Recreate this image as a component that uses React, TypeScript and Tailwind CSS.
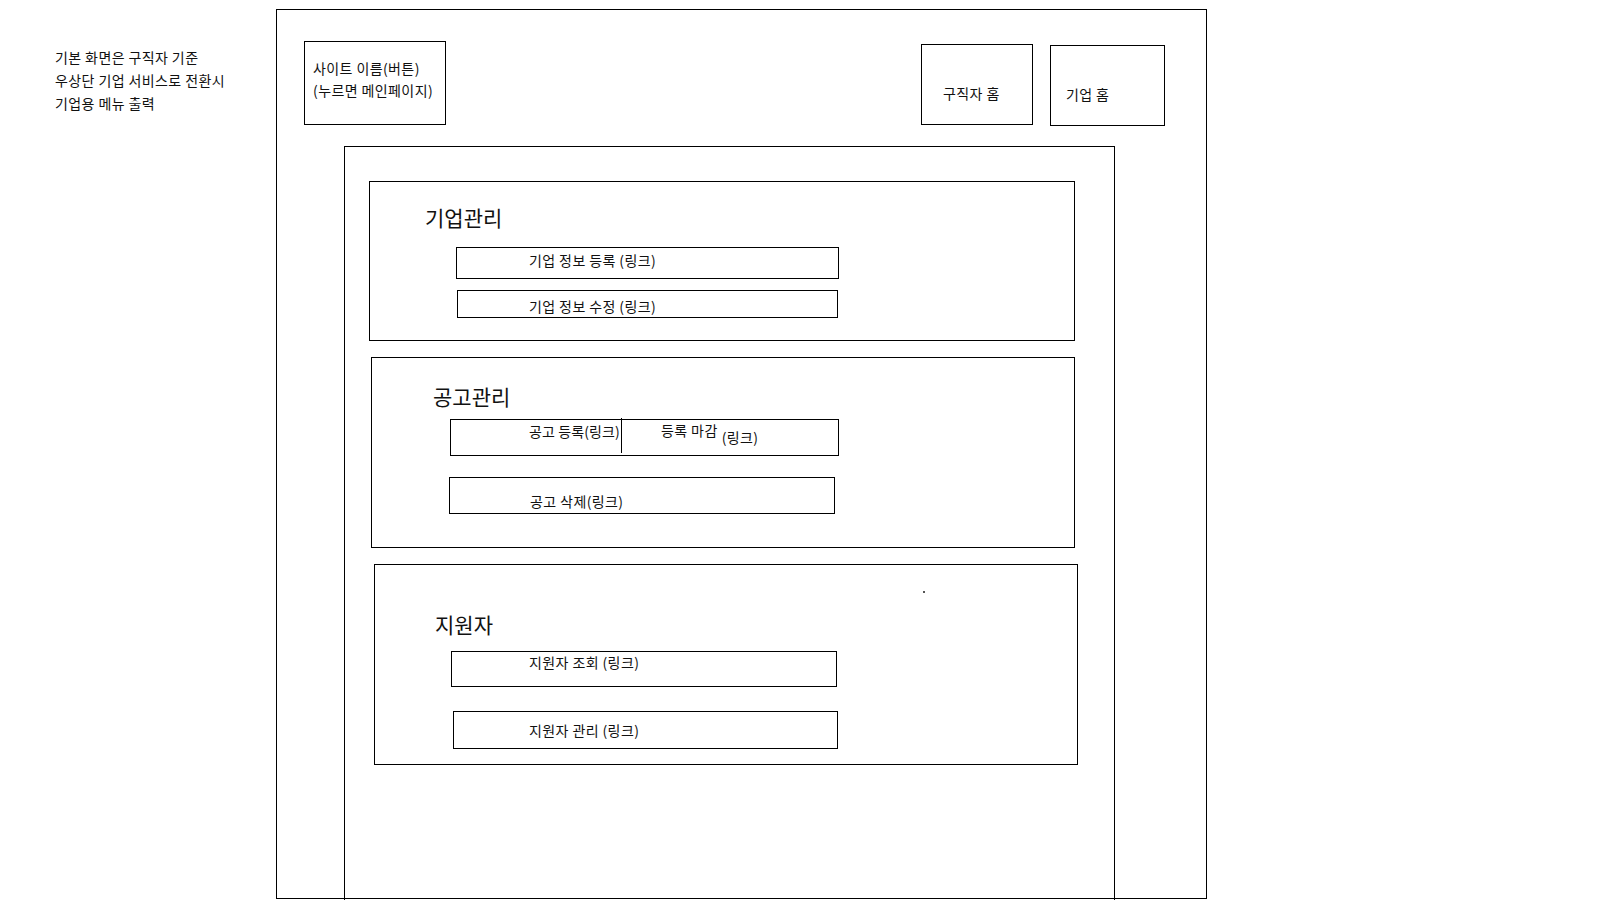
const font = { fontFamily: '"Noto Sans CJK KR", "Noto Sans", sans-serif' };

function LinkBox({
  className,
  children,
}: {
  className: string;
  children: React.ReactNode;
}) {
  return (
    <div className={`flex whitespace-nowrap border border-black ${className}`}>{children}</div>
  );
}

export default function App() {
  return (
    <main
      className="flex h-[900px] w-[1600px] overflow-hidden bg-white text-[14px] tracking-[0.4px] text-[#111]"
      style={font}
    >
      {/* 메모 */}
      <div className="w-[276px] shrink-0 pl-[55px] pt-[46px] leading-[23px]">
        <p>기본 화면은 구직자 기준</p>
        <p>우상단 기업 서비스로 전환시</p>
        <p>기업용 메뉴 출력</p>
      </div>

      {/* 바깥 프레임 */}
      <div className="mt-[9px] flex h-[890px] w-[931px] shrink-0 flex-col border border-black">
        <header className="flex h-[136px] shrink-0 items-start pl-[27px] pt-[31px]">
          <div className="h-[84px] w-[142px] whitespace-nowrap border border-black pl-[8px] pt-[15px] leading-[22px]">
            <p>사이트 이름(버튼)</p>
            <p>(누르면 메인페이지)</p>
          </div>
          <div className="ml-auto mt-[3px] h-[81px] w-[112px] border border-black pl-[21px] pt-[39px] leading-[18px]">
            구직자 홈
          </div>
          <div className="ml-[17px] mr-[41px] mt-[4px] h-[81px] w-[115px] border border-black pl-[15px] pt-[39px] leading-[18px]">
            기업 홈
          </div>
        </header>

        {/* 안쪽 프레임 */}
        <div className="-mb-[3px] ml-[67px] flex w-[771px] flex-1 flex-col border-x border-t border-black">
          {/* 기업관리 */}
          <section className="ml-[24px] mt-[34px] h-[160px] w-[706px] border border-black">
            <h2 className="mt-[21px] pl-[55px] text-[21px] leading-[28px] tracking-normal">기업관리</h2>
            <LinkBox className="ml-[86px] mt-[16px] h-[32px] w-[383px] items-start pl-[72px] pt-[3px] leading-[18px]">
              기업 정보 등록 (링크)
            </LinkBox>
            <LinkBox className="ml-[87px] mt-[11px] h-[28px] w-[381px] items-start pl-[71px] pt-[6px] leading-[18px]">
              기업 정보 수정 (링크)
            </LinkBox>
          </section>

          {/* 공고관리 */}
          <section className="ml-[26px] mt-[16px] h-[191px] w-[704px] border border-black">
            <h2 className="mt-[24px] pl-[61px] text-[21px] leading-[28px] tracking-normal">공고관리</h2>
            <LinkBox className="ml-[78px] mt-[9px] h-[37px] w-[389px] items-start leading-[18px]">
              <div className="w-[170px] shrink-0 pl-[78px] pt-[2px] tracking-[0.1px]">공고 등록(링크)</div>
              <span className="-mt-[2px] h-[35px] w-px shrink-0 bg-black" />
              <div className="flex items-start pl-[39px] pt-[1px]">
                <span>등록 마감</span>
                <span className="ml-[4px] mt-[7px]">(링크)</span>
              </div>
            </LinkBox>
            <LinkBox className="ml-[77px] mt-[21px] h-[37px] w-[386px] items-end pb-[3px] pl-[80px] leading-[18px]">
              공고 삭제(링크)
            </LinkBox>
          </section>

          {/* 지원자 */}
          <section className="relative ml-[29px] mt-[16px] h-[201px] w-[704px] border border-black">
            <span className="absolute left-[548px] top-[26px] h-[2px] w-[2px] bg-[#555]" />
            <h2 className="mt-[45px] pl-[60px] text-[21px] leading-[28px] tracking-normal">지원자</h2>
            <LinkBox className="ml-[76px] mt-[13px] h-[36px] w-[386px] items-start pl-[77px] pt-[1px] leading-[18px]">
              지원자 조회 (링크)
            </LinkBox>
            <LinkBox className="ml-[78px] mt-[24px] h-[38px] w-[385px] items-start pl-[75px] pt-[9px] leading-[18px]">
              지원자 관리 (링크)
            </LinkBox>
          </section>
        </div>
      </div>
    </main>
  );
}
